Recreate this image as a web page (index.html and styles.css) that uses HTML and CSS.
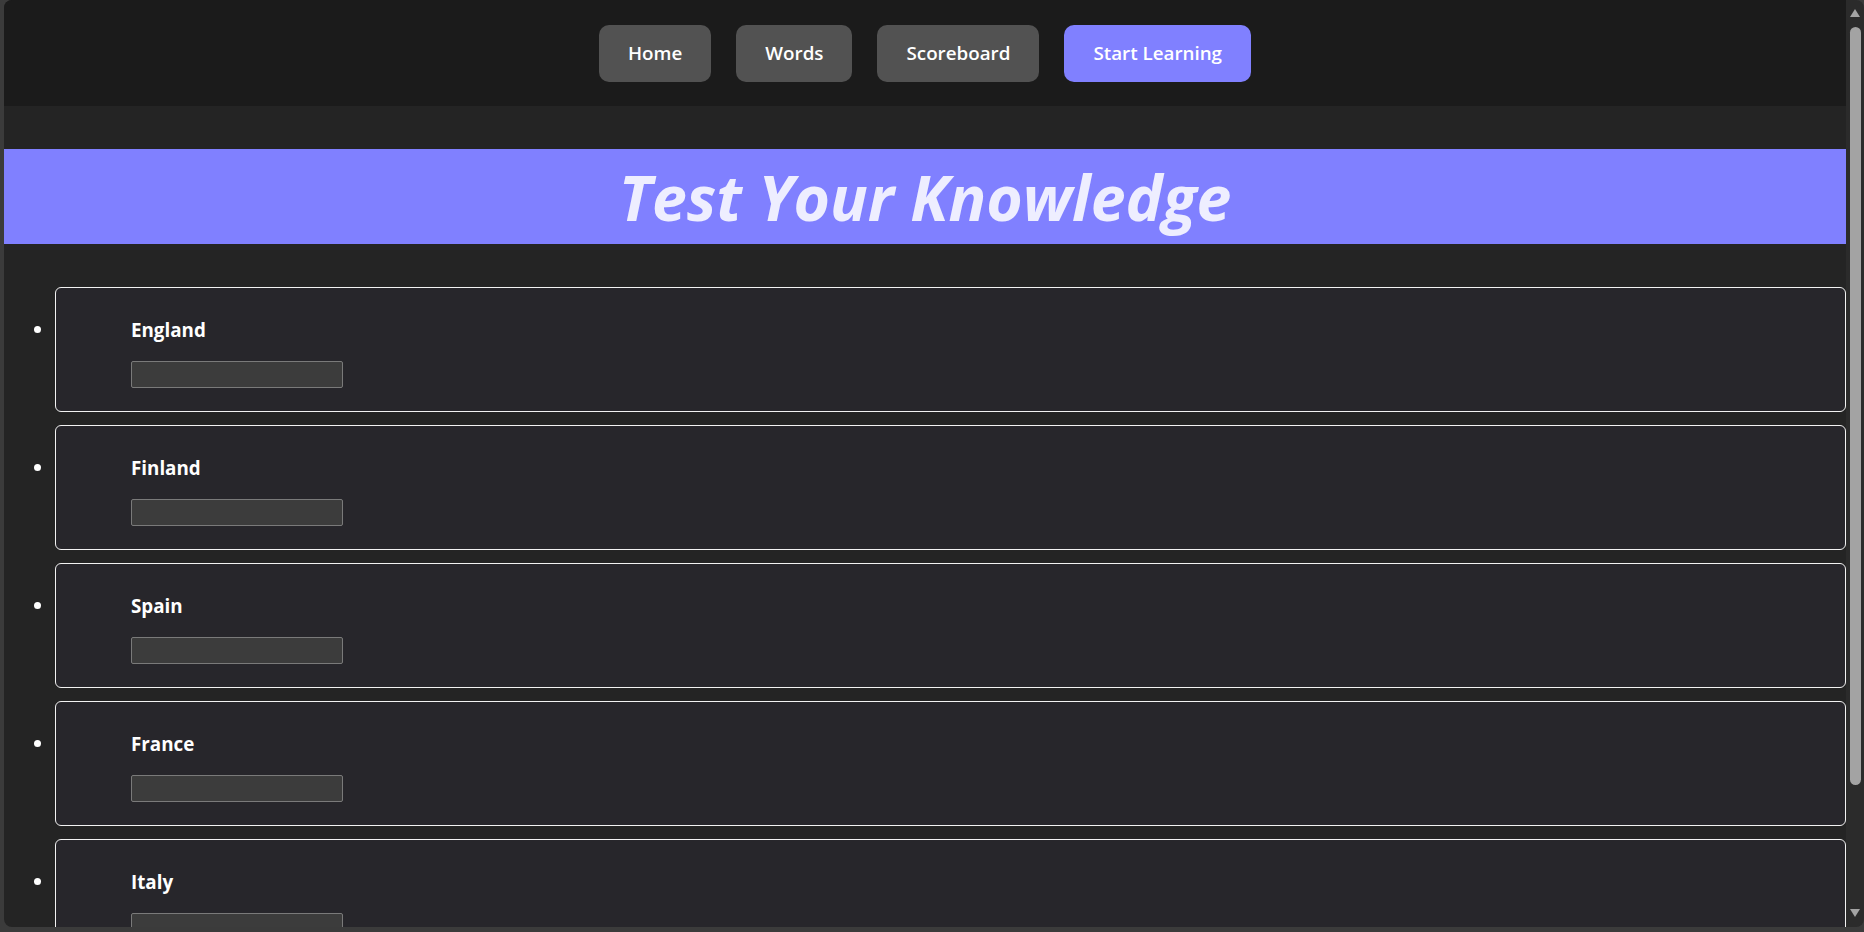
FILE: index.html
```html
<!DOCTYPE html>
<html lang="en">
<head>
<meta charset="utf-8">
<title>Test Your Knowledge</title>
<link rel="stylesheet" href="styles.css">
</head>
<body>
<div class="window">
  <div class="page">
    <nav class="nav">
      <a class="nav-btn">Home</a>
      <a class="nav-btn">Words</a>
      <a class="nav-btn">Scoreboard</a>
      <a class="nav-btn nav-btn-primary">Start Learning</a>
    </nav>
    <header class="banner">
      <h1 class="banner-title">Test Your Knowledge</h1>
    </header>
    <ul class="quiz-list">
      <li class="quiz-card">
        <label class="quiz-label">England</label>
        <input class="quiz-input" type="text">
      </li>
      <li class="quiz-card">
        <label class="quiz-label">Finland</label>
        <input class="quiz-input" type="text">
      </li>
      <li class="quiz-card">
        <label class="quiz-label">Spain</label>
        <input class="quiz-input" type="text">
      </li>
      <li class="quiz-card">
        <label class="quiz-label">France</label>
        <input class="quiz-input" type="text">
      </li>
      <li class="quiz-card">
        <label class="quiz-label">Italy</label>
        <input class="quiz-input" type="text">
      </li>
    </ul>
  </div>
  <div class="scrollbar">
    <div class="arrow-up"></div>
    <div class="thumb"></div>
    <div class="track-rest"></div>
    <div class="arrow-down"></div>
  </div>
</div>
</body>
</html>
```
FILE: styles.css
```css
html, body {
  margin: 0;
  padding: 0;
}
body {
  background: #3b3b3b;
  height: 932px;
  overflow: hidden;
  font-family: "Open Sans", "Noto Sans", sans-serif;
  color: #ffffff;
}
.window {
  margin-left: 4px;
  height: 927px;
  display: flex;
  border-radius: 8px;
  overflow: hidden;
}
.page {
  flex: 1;
  min-width: 0;
  background: #242424;
  overflow: hidden;
}
.nav {
  height: 106px;
  background: #1b1b1b;
  display: flex;
  justify-content: center;
  align-items: center;
  gap: 25px;
}
.nav-btn {
  height: 57px;
  box-sizing: border-box;
  padding: 0 29px;
  display: flex;
  align-items: center;
  background: #525252;
  color: #ffffff;
  border-radius: 10px;
  font-size: 18.8px;
  font-weight: 600;
}
.nav-btn-primary {
  background: #8080ff;
}
.banner {
  margin-top: 43px;
  height: 95px;
  background: #8080ff;
  display: flex;
  justify-content: center;
  align-items: center;
}
.banner-title {
  margin: 0;
  font-size: 62.5px;
  font-weight: 700;
  font-style: italic;
  color: #eeeeff;
  letter-spacing: 0;
}
.quiz-list {
  margin: 43px 0 0;
  padding: 0 0 0 51px;
  list-style: disc;
}
.quiz-card {
  box-sizing: border-box;
  height: 125px;
  margin-bottom: 13px;
  padding: 28px 0 0 75px;
  border: 1px solid #f2f2f2;
  border-radius: 6px;
  background: #27262b;
  font-size: 20px;
}
.quiz-label {
  display: block;
  font-size: 18.8px;
  font-weight: 700;
  line-height: 27px;
}
.quiz-input {
  display: block;
  margin: 17px 0 0;
  width: 212px;
  height: 27px;
  box-sizing: border-box;
  background: #3c3c3c;
  border: 1px solid #7a7a7a;
  border-radius: 2px;
  padding: 0;
}
.scrollbar {
  width: 18px;
  background: #2b2b2b;
  display: flex;
  flex-direction: column;
  align-items: center;
  padding: 9px 0 10px;
  box-sizing: border-box;
}
.arrow-up {
  width: 0;
  height: 0;
  border-left: 5px solid transparent;
  border-right: 5px solid transparent;
  border-bottom: 8px solid #a3a3a3;
}
.thumb {
  margin-top: 10px;
  width: 11px;
  height: 758px;
  border-radius: 6px;
  background: #a3a3a3;
}
.track-rest {
  flex: 1;
}
.arrow-down {
  width: 0;
  height: 0;
  border-left: 5px solid transparent;
  border-right: 5px solid transparent;
  border-top: 8px solid #a3a3a3;
}
```
